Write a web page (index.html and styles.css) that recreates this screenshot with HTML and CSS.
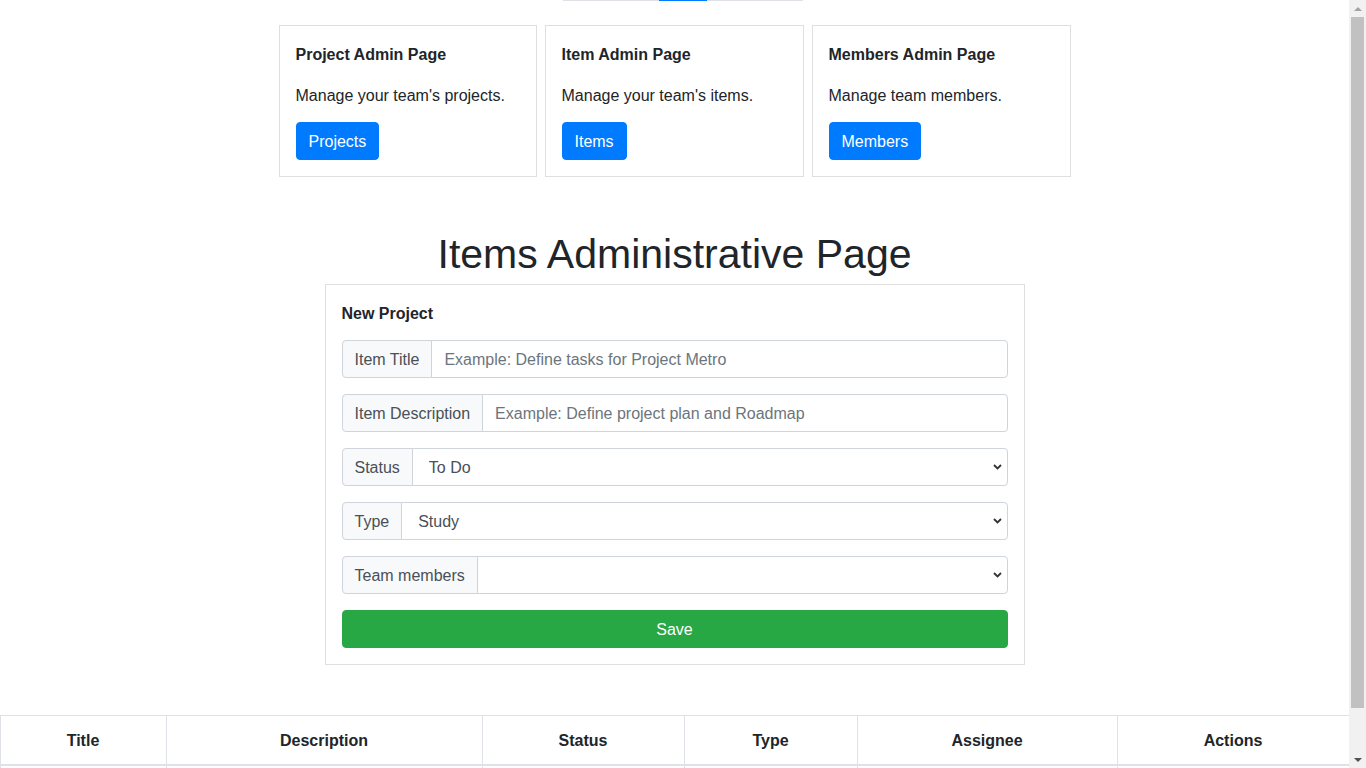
FILE: index.html
```html
<!DOCTYPE html>
<html lang="en">
<head>
<meta charset="utf-8">
<title>Items Administrative Page</title>
<link rel="stylesheet" href="styles.css">
</head>
<body>
<div class="page">
  <nav class="tabs">
    <span class="tab"></span>
    <span class="tab active"></span>
    <span class="tab"></span>
  </nav>

  <section class="admin-cards">
    <div class="card">
      <div class="card-body">
        <h5 class="card-title">Project Admin Page</h5>
        <p class="card-text">Manage your team's projects.</p>
        <a class="btn btn-primary">Projects</a>
      </div>
    </div>
    <div class="card">
      <div class="card-body">
        <h5 class="card-title">Item Admin Page</h5>
        <p class="card-text">Manage your team's items.</p>
        <a class="btn btn-primary">Items</a>
      </div>
    </div>
    <div class="card">
      <div class="card-body">
        <h5 class="card-title">Members Admin Page</h5>
        <p class="card-text">Manage team members.</p>
        <a class="btn btn-primary">Members</a>
      </div>
    </div>
  </section>

  <h1 class="page-title">Items Administrative Page</h1>

  <section class="card form-card">
    <div class="card-body">
      <h5 class="card-title form-title">New Project</h5>
      <div class="input-group">
        <span class="input-group-text">Item Title</span>
        <input class="form-control" type="text" placeholder="Example: Define tasks for Project Metro">
      </div>
      <div class="input-group">
        <span class="input-group-text">Item Description</span>
        <input class="form-control" type="text" placeholder="Example: Define project plan and Roadmap">
      </div>
      <div class="input-group">
        <span class="input-group-text">Status</span>
        <select class="form-select">
          <option>To Do</option>
          <option>In Progress</option>
          <option>Done</option>
        </select>
      </div>
      <div class="input-group">
        <span class="input-group-text">Type</span>
        <select class="form-select">
          <option>Study</option>
          <option>Task</option>
          <option>Bug</option>
        </select>
      </div>
      <div class="input-group">
        <span class="input-group-text">Team members</span>
        <select class="form-select">
          <option></option>
        </select>
      </div>
      <button class="btn btn-success btn-block" type="button">Save</button>
    </div>
  </section>

  <table class="items-table">
    <colgroup>
      <col class="c-title">
      <col class="c-desc">
      <col class="c-status">
      <col class="c-type">
      <col class="c-assignee">
      <col class="c-actions">
    </colgroup>
    <thead>
      <tr>
        <th>Title</th>
        <th>Description</th>
        <th>Status</th>
        <th>Type</th>
        <th>Assignee</th>
        <th>Actions</th>
      </tr>
    </thead>
    <tbody>
      <tr><td></td><td></td><td></td><td></td><td></td><td></td></tr>
    </tbody>
  </table>
</div>

<div class="scrollbar" aria-hidden="true">
  <div class="sb-btn"><span class="arrow-up"></span></div>
  <div class="sb-track"><div class="sb-thumb"></div></div>
  <div class="sb-btn"><span class="arrow-down"></span></div>
</div>
</body>
</html>
```

FILE: styles.css
```css
* {
  box-sizing: border-box;
}

html, body {
  margin: 0;
  height: 768px;
}

body {
  display: flex;
  overflow: hidden;
  font-family: "Liberation Sans", Arial, sans-serif;
  font-size: 16px;
  line-height: 24px;
  color: #212529;
  background: #fff;
}

.page {
  flex: 1;
  min-width: 0;
  display: flex;
  flex-direction: column;
  align-items: center;
}

.page > * {
  flex-shrink: 0;
}

/* top tabs underline */
.tabs {
  display: flex;
  height: 1px;
  margin-left: 16px;
}
.tab {
  width: 96px;
  height: 1px;
  background: #dee2e6;
}
.tab.active {
  width: 48px;
  background: #007bff;
}

/* cards */
.admin-cards {
  margin-top: 24px;
  width: 792px;
  display: grid;
  grid-template-columns: 258px 259px 259px;
  column-gap: 8px;
}

.card {
  border: 1px solid #dfdfdf;
  background: #fff;
}

.card-body {
  padding: 16px;
}

.card-title {
  margin: 0 0 16px;
  padding-top: 1px;
  font-size: 16px;
  line-height: 24px;
  font-weight: 700;
}

.card-text {
  margin: 0 0 14px;
  padding-top: 1px;
}

.btn {
  display: inline-block;
  padding: 7px 12px 5px;
  font-family: inherit;
  font-size: 16px;
  line-height: 24px;
  border: 1px solid transparent;
  border-radius: 4px;
  color: #fff;
  cursor: pointer;
  text-align: center;
}

.btn-primary {
  background: #007bff;
  border-color: #007bff;
}

.btn-success {
  background: #28a745;
  border-color: #28a745;
}

.btn-block {
  display: block;
  width: 100%;
}

/* page heading */
.page-title {
  margin: 49px 0 6px;
  padding-top: 4px;
  font-size: 41px;
  line-height: 48px;
  font-weight: 400;
  color: #212529;
}

/* form card */
.form-card {
  width: 700px;
}

.form-title {
  margin-bottom: 14px;
}

.input-group {
  display: flex;
  height: 38px;
  margin-bottom: 16px;
}

.input-group-text {
  display: flex;
  align-items: center;
  padding: 1px 12px 0;
  background: #f8f9fa;
  border: 1px solid #ced4da;
  border-radius: 4px 0 0 4px;
  color: #495057;
  white-space: nowrap;
}

.form-control,
.form-select {
  flex: 1;
  min-width: 0;
  margin: 0 0 0 -1px;
  height: 38px;
  font-family: inherit;
  font-size: 16px;
  color: #495057;
  background-color: #fff;
  border: 1px solid #ced4da;
  border-radius: 0 4px 4px 0;
  outline: none;
}

.form-control {
  padding: 1px 12px 0;
}

.form-control::placeholder {
  color: #6c757d;
  opacity: 1;
}

.form-select {
  appearance: none;
  -webkit-appearance: none;
  padding: 1px 32px 0 16px;
  background-image: url("data:image/svg+xml,%3Csvg xmlns='http://www.w3.org/2000/svg' width='9' height='6' viewBox='0 0 9 6'%3E%3Cpath d='M1 1l3.5 3.5L8 1' fill='none' stroke='%23333' stroke-width='1.8'/%3E%3C/svg%3E");
  background-repeat: no-repeat;
  background-position: right 5px center;
  background-size: 9px 6px;
}

/* table */
.items-table {
  margin-top: 50px;
  width: 100%;
  table-layout: fixed;
  border-collapse: collapse;
}

.c-title { width: 166px; }
.c-desc { width: 316px; }
.c-status { width: 202px; }
.c-type { width: 173px; }
.c-assignee { width: 260px; }
.c-actions { width: 232px; }

.items-table th,
.items-table td {
  border: 1px solid #dee2e6;
  padding: 13px 12px 11px;
  text-align: center;
}

.items-table th {
  font-weight: 700;
  border-bottom-width: 2px;
}

.items-table td {
  height: 49px;
}

/* scrollbar */
.scrollbar {
  width: 17px;
  flex: none;
  display: flex;
  flex-direction: column;
  background: #f1f1f1;
}

.sb-btn {
  height: 17px;
  display: flex;
  align-items: center;
  justify-content: center;
}

.arrow-up {
  width: 0;
  height: 0;
  border-left: 4px solid transparent;
  border-right: 4px solid transparent;
  border-bottom: 4px solid #a3a3a3;
}

.arrow-down {
  width: 0;
  height: 0;
  border-left: 4px solid transparent;
  border-right: 4px solid transparent;
  border-top: 4px solid #505050;
}

.sb-track {
  flex: 1;
  padding: 0 2px;
}

.sb-thumb {
  height: 691px;
  background: #c1c1c1;
}
```
